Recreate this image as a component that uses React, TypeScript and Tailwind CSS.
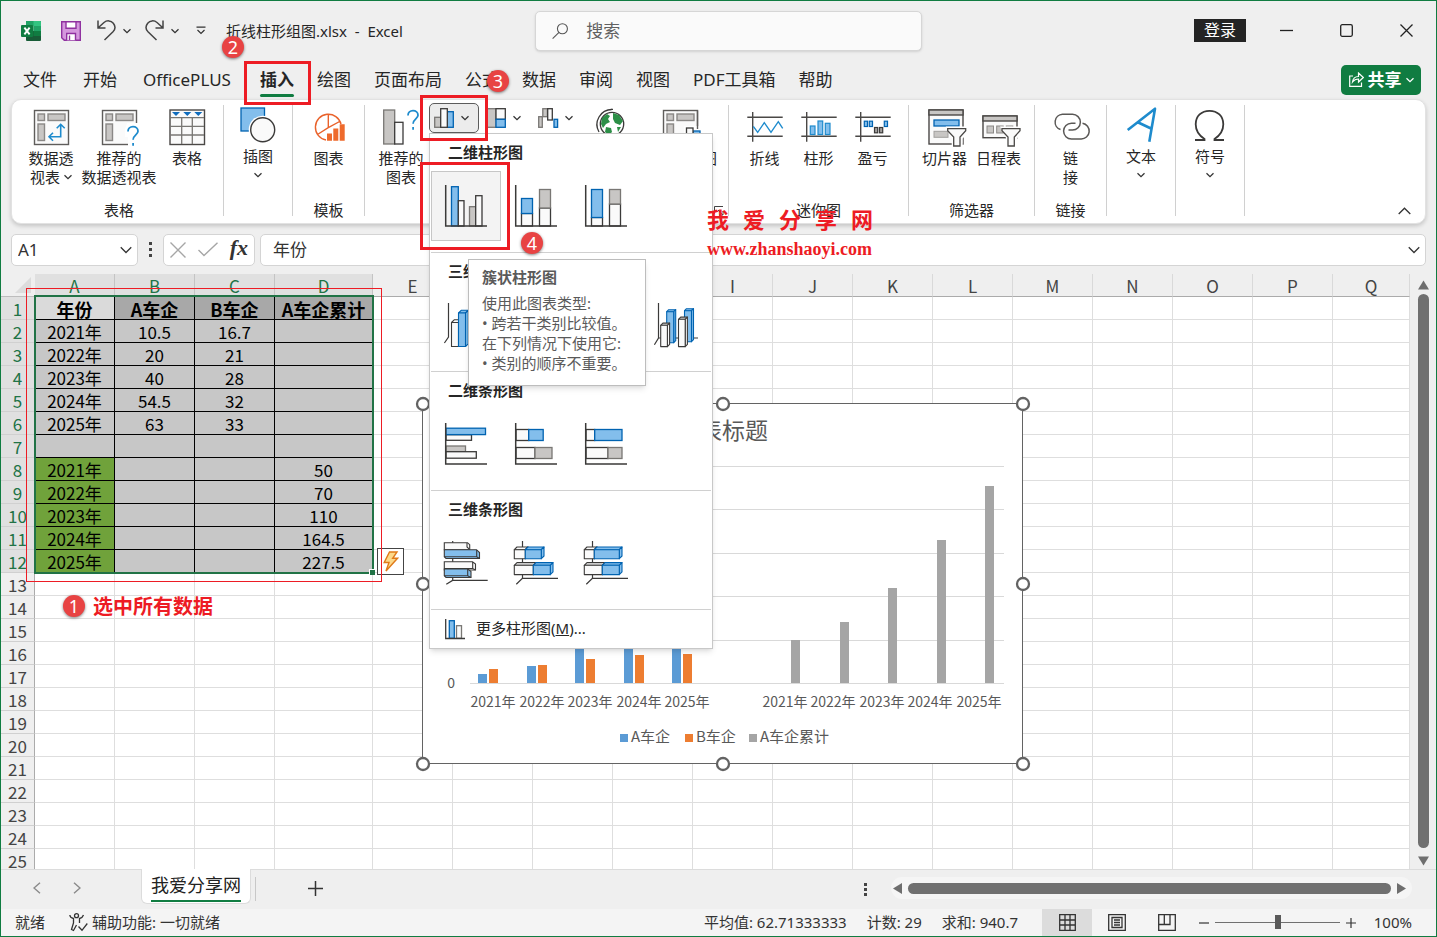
import { useState, type ReactNode } from "react";
import clsx from "clsx";

type Tone = "blue" | "gray" | "white";

const tones: Record<Tone, { fill: string; stroke: string }> = {
  blue: { fill: "#83beec", stroke: "#0063b1" },
  gray: { fill: "#c8c6c4", stroke: "#797774" },
  white: { fill: "#fafafa", stroke: "#3b3a39" },
};

type BarProps = { x: number; y: number; w: number; h: number; tone: Tone };

function Bar({ x, y, w, h, tone }: BarProps) {
  return <rect x={x} y={y} width={w} height={h} fill={tones[tone].fill} stroke={tones[tone].stroke} strokeWidth={1.3} />;
}

// Box with a top and a side face
function Prism({ x, y, w, h, tone, d = 2.7 }: BarProps & { d?: number }) {
  const t = tones[tone];
  return (
    <g fill={t.fill} stroke={t.stroke} strokeWidth={1.1} strokeLinejoin="round">
      <path d={`M${x} ${y}l${d} ${-d}h${w}l${-d} ${d}z`} />
      <path d={`M${x + w} ${y}l${d} ${-d}v${h}l${-d} ${d}z`} />
      <rect x={x} y={y} width={w} height={h} />
    </g>
  );
}

function Svg({ w = 36, h = 36, children }: { w?: number; h?: number; children: ReactNode }) {
  return (
    <svg width={w} height={h} viewBox={`0 0 ${w} ${h}`} fill="none" className="shrink-0 overflow-visible" aria-hidden="true">
      {children}
    </svg>
  );
}

function Chevron({ size = 8, color = "#333" }: { size?: number; color?: string }) {
  return (
    <svg width={size} height={size} viewBox="0 0 8 8" fill="none" stroke={color} strokeWidth={10 / size} className="shrink-0" aria-hidden="true">
      <path d="M0.5 2.2L4 5.7L7.5 2.2" />
    </svg>
  );
}

const Axes = () => <path d="M0.7 0V41H42" stroke="#3b3a39" strokeWidth={1.5} />;

/* ---------- ribbon icons ---------- */

const PivotFrame = () => (
  <g stroke="#5f5d5b" strokeWidth={1.4}>
    <rect x={1.5} y={1.5} width={34} height={34} fill="#fafafa" />
    <g fill="#c8c6c4" stroke="#8a8886">
      <rect x={5} y={5} width={6.5} height={6.5} />
      <rect x={15} y={5} width={17} height={6.5} />
      <rect x={5} y={15} width={6.5} height={16.5} />
    </g>
  </g>
);

const PivotIcon = () => (
  <Svg>
    <PivotFrame />
    <path d="M27.7 15.5V27.7H16M23.7 19.3L27.7 15.3L31.7 19.3M20 23.7L16 27.7L20 31.7" stroke="#1e8bcd" strokeWidth={1.6} />
  </Svg>
);

const Question = ({ x, y }: { x: number; y: number }) => (
  <path
    transform={`translate(${x} ${y})`}
    d="M0.5 5.5C0.5 2.5 2.7 0.7 5.5 0.7S10.5 2.5 10.5 5.3C10.5 8.7 5.6 9.3 5.6 13.7M5.6 17V19.8"
    stroke="#1e8bcd"
    strokeWidth={1.8}
  />
);

const RecommendedPivotIcon = () => (
  <Svg>
    <PivotFrame />
    <path d="M26 14H38V38H27V28H24V20Z" fill="#fff" />
    <Question x={26.5} y={17} />
  </Svg>
);

const TableIcon = () => (
  <Svg>
    <rect x={1} y={1} width={34.5} height={34.5} fill="#fafafa" stroke="#4a4846" strokeWidth={1.4} />
    <path d="M1 8.7H35M1 17.3H35M1 26H35M12.7 8.7V35M23.3 8.7V35" stroke="#797774" strokeWidth={1.3} />
    <path d="M3 3H11L7 7ZM14.3 3H22.3L18.3 7ZM25.3 3H33.3L29.3 7Z" fill="#0f6cbd" />
  </Svg>
);

const ShapesIcon = () => (
  <Svg>
    <rect x={1} y={1} width={23.5} height={23} fill="#83beec" stroke="#0063b1" strokeWidth={1.3} />
    <circle cx={22.7} cy={22.7} r={14} fill="#fff" />
    <circle cx={22.7} cy={22.7} r={12} fill="#fafafa" stroke="#3b3a39" strokeWidth={1.4} />
  </Svg>
);

const TemplateChartIcon = () => (
  <Svg>
    <path d="M15 31A13 13 0 1 1 30 15M17.3 5V18.7L6.5 25.5M17.3 18.7L29.5 12" stroke="#e9622b" strokeWidth={1.4} />
    <path d="M16 24.5h5v7.3h-5zM22.3 19.5h5v12.3h-5zM28.7 15.3h5v16.5h-5z" fill="#ee6a2c" />
  </Svg>
);

const RecommendedChartIcon = () => (
  <Svg>
    <Bar x={0.7} y={1} w={11} h={34} tone="gray" />
    <Bar x={11.7} y={13.3} w={8.3} h={21.7} tone="white" />
    <Question x={24.5} y={1} />
  </Svg>
);

const ColumnIcon = () => (
  <Svg w={20} h={20}>
    <Bar x={0.7} y={9.3} w={6} h={10} tone="gray" />
    <Bar x={13.3} y={3.7} w={6} h={15.6} tone="blue" />
    <Bar x={6.7} y={0.7} w={6.6} h={18.6} tone="white" />
  </Svg>
);

const HierarchyIcon = () => (
  <Svg w={20} h={20}>
    <Bar x={0.7} y={0.7} w={9.3} h={18.6} tone="gray" />
    <Bar x={10} y={0.7} w={9.3} h={10.6} tone="white" />
    <Bar x={10} y={11.3} w={9.3} h={8} tone="blue" />
  </Svg>
);

const WaterfallIcon = () => (
  <Svg w={20} h={20}>
    <Bar x={0.7} y={8.7} w={3.6} h={10.6} tone="gray" />
    <Bar x={4.8} y={0.7} w={4.6} h={8} tone="gray" />
    <Bar x={9.7} y={0.7} w={4.6} h={11.3} tone="white" />
    <Bar x={16} y={11.3} w={3.6} h={8} tone="blue" />
  </Svg>
);

const GlobeIcon = () => (
  <Svg>
    <circle cx={19} cy={15} r={11.7} fill="#fff" stroke="#3b3a39" strokeWidth={1.3} />
    <path d="M19 0.5A15 15 0 0 0 6 23M15 1A15 15 0 0 1 20 0.3" stroke="#3b3a39" strokeWidth={1.3} />
    <path d="M9 9L14 5L17 7L15 10L17 13L13 15L10 19L8 15ZM20 4L26 6L30 12L27 16L22 14L20 10ZM13 18L18 19L19 23L16 26L12 23ZM24 18L28 18L25 23Z" fill="#2c8f47" />
  </Svg>
);

const PivotChartIcon = () => (
  <Svg>
    <PivotFrame />
    <path d="M22 17H40V38H22Z" fill="#fff" />
    <path d="M35.5 1.5V20" stroke="#5f5d5b" strokeWidth={1.4} />
    <Bar x={31} y={22} w={7} h={14} tone="blue" />
    <Bar x={24.5} y={19} w={6.5} h={17} tone="white" />
  </Svg>
);

const SparkFrame = () => <path d="M0.3 8.3H35.7M0.3 27.3H35.7M5.7 3V32.7" stroke="#4a4846" strokeWidth={1.4} />;

const SparkLineIcon = () => (
  <Svg>
    <SparkFrame />
    <path d="M6.3 17.3L10.7 23.3L17.3 13.7L24 23.3L31.3 12.7L35.7 19.3" stroke="#1e8bcd" strokeWidth={1.4} />
  </Svg>
);

const SparkColumnIcon = () => (
  <Svg>
    <SparkFrame />
    <g fill="#83beec" stroke="#1e8bcd" strokeWidth={1.2}>
      <rect x={9.3} y={17} width={4.7} height={8.5} />
      <rect x={17} y={12} width={4.7} height={13.5} />
      <rect x={24.3} y={14.3} width={4.7} height={11.2} />
    </g>
  </Svg>
);

const WinLossIcon = () => (
  <Svg>
    <SparkFrame />
    <g fill="#83beec" stroke="#0063b1" strokeWidth={1.2}>
      <rect x={9.3} y={12.2} width={3.2} height={5.3} />
      <rect x={14.3} y={12.2} width={3.2} height={5.3} />
      <rect x={29.3} y={12.2} width={3.2} height={5.3} />
    </g>
    <g fill="#a19f9d" stroke="#3b3a39" strokeWidth={1.2}>
      <rect x={19.5} y={18.5} width={3.2} height={5.3} />
      <rect x={24.5} y={18.5} width={3.2} height={5.3} />
    </g>
  </Svg>
);

const Funnel = ({ x }: { x: number }) => (
  <g transform={`translate(${x} 0)`}>
    <path d="M-2 17.5H20V24L15 29.5V38H4V29Z" fill="#fff" />
    <path d="M0 19.7H18V21.7L12.3 28V37H6V28L0 21.7Z" fill="#fafafa" stroke="#4a4846" strokeWidth={1.3} />
  </g>
);

const SlicerIcon = () => (
  <Svg>
    <rect x={2} y={1} width={34} height={34} fill="#fafafa" stroke="#4a4846" strokeWidth={1.4} />
    <rect x={2} y={1} width={34} height={5} fill="#c8c6c4" stroke="#4a4846" strokeWidth={1.4} />
    <Bar x={7} y={11} w={25} h={6} tone="blue" />
    <rect x={7} y={22.3} width={14} height={6} fill="#c8c6c4" stroke="#a19f9d" />
    <Funnel x={20.7} />
  </Svg>
);

const TimelineIcon = () => (
  <Svg>
    <rect x={2} y={7} width={34} height={21.7} fill="#fafafa" stroke="#4a4846" strokeWidth={1.4} />
    <rect x={2} y={7} width={34} height={5} fill="#c8c6c4" stroke="#4a4846" strokeWidth={1.4} />
    <g fill="#c8c6c4" stroke="#8a8886">
      <rect x={6} y={17} width={6.5} height={7} />
      <rect x={15.7} y={17} width={6.5} height={7} />
      <rect x={25.3} y={17} width={6.5} height={7} />
    </g>
    <Funnel x={21} />
  </Svg>
);

const LinkIcon = () => (
  <Svg>
    <path
      d="M7.5 20.5A7.8 7.8 0 0 1 9.5 5.3H19.5A7.8 7.8 0 0 1 19.5 21H15.5M29.5 14.3A7.9 7.9 0 0 1 28 30H18.5A7.9 7.9 0 0 1 18.5 14.2H22.5"
      stroke="#5a5856"
      strokeWidth={1.5}
    />
  </Svg>
);

const TextIcon = () => (
  <Svg>
    <path d="M4.7 23L32 1.7L26.3 34.7M15.3 15.5L28 21.5" stroke="#1e8bcd" strokeWidth={2.6} strokeLinejoin="round" />
  </Svg>
);

const OmegaIcon = () => (
  <Svg>
    <path d="M3 33H12.5V32C7 28.5 3.7 23.5 3.7 17.3C3.7 9 9.5 3.8 17.5 3.8S31.3 9 31.3 17.3C31.3 23.5 28 28.5 22.5 32V33H32" stroke="#3b3a39" strokeWidth={1.8} />
  </Svg>
);

/* ---------- gallery icons ---------- */

const galleryIcons: Record<string, ReactNode> = {
  "簇状柱形图": (
    <>
      <Bar x={6.5} y={1.7} w={6.8} h={39.3} tone="blue" />
      <Bar x={13.3} y={15.7} w={5.7} h={25.3} tone="white" />
      <Bar x={24.5} y={21.7} w={6.2} h={19.3} tone="gray" />
      <Bar x={30.7} y={10.7} w={6.3} h={30.3} tone="white" />
      <Axes />
    </>
  ),
  "堆积柱形图": (
    <>
      <Bar x={6.5} y={28.5} w={11} h={12.5} tone="white" />
      <Bar x={6.5} y={13.5} w={11} h={15} tone="blue" />
      <Bar x={24.5} y={23} w={11} h={18} tone="white" />
      <Bar x={24.5} y={4.5} w={11} h={18.5} tone="gray" />
      <Axes />
    </>
  ),
  "百分比堆积柱形图": (
    <>
      <Bar x={6.5} y={32.5} w={11} h={8.5} tone="white" />
      <Bar x={6.5} y={4.5} w={11} h={28} tone="blue" />
      <Bar x={24.5} y={19} w={11} h={22} tone="white" />
      <Bar x={24.5} y={4.5} w={11} h={14.5} tone="gray" />
      <Axes />
    </>
  ),
  "三维簇状柱形图": (
    <>
      <path d="M3.5 -1V33L-0.6 39" stroke="#3b3a39" strokeWidth={1.2} />
      <Prism x={6.5} y={18.5} w={7} h={24} tone="white" />
      <Prism x={13.5} y={9} w={7} h={33.5} tone="blue" />
      <Prism x={26} y={22} w={6} h={20.5} tone="white" />
    </>
  ),
  "三维堆积柱形图": (
    <>
      <path d="M3.5 -1V34L-0.6 40.7M3.5 34H43" stroke="#3b3a39" strokeWidth={1.2} />
      <Prism x={8} y={28} w={9} h={14.5} tone="white" />
      <Prism x={8} y={14} w={9} h={14} tone="blue" />
    </>
  ),
  "三维百分比堆积柱形图": (
    <>
      <path d="M3.5 -1V34L-0.6 40.7M3.5 34H43" stroke="#3b3a39" strokeWidth={1.2} />
      <Prism x={8} y={30} w={9} h={12.5} tone="white" />
      <Prism x={8} y={8} w={9} h={22} tone="blue" />
    </>
  ),
  "三维柱形图": (
    <>
      <path d="M3.5 -1V34L-0.6 40.7M3.5 34H43" stroke="#3b3a39" strokeWidth={1.2} />
      <Prism x={11.7} y={7.7} w={7} h={31} tone="blue" d={2} />
      <Prism x={5.7} y={21.3} w={6.7} h={21.3} tone="white" d={2.2} />
      <Prism x={29.5} y={6.7} w={7} h={31} tone="blue" d={2} />
      <Prism x={23.5} y={15.3} w={6.7} h={27.3} tone="white" d={2.2} />
    </>
  ),
  "簇状条形图": (
    <>
      <Bar x={1} y={11.7} w={25.5} h={5.6} tone="white" />
      <Bar x={1} y={5.2} w={39.5} h={6.4} tone="blue" />
      <Bar x={1} y={23} w={19.5} h={5.7} tone="gray" />
      <Bar x={1} y={28.7} w={30.3} h={6.5} tone="white" />
      <Axes />
    </>
  ),
  "堆积条形图": (
    <>
      <Bar x={1} y={6.5} w={12.7} h={11} tone="white" />
      <Bar x={13.7} y={6.5} w={14.5} h={11} tone="blue" />
      <Bar x={1} y={24.5} w={19} h={11} tone="white" />
      <Bar x={20} y={24.5} w={17} h={11} tone="gray" />
      <Axes />
    </>
  ),
  "百分比堆积条形图": (
    <>
      <Bar x={1} y={6.5} w={8.7} h={11} tone="white" />
      <Bar x={9.7} y={6.5} w={27.3} h={11} tone="blue" />
      <Bar x={1} y={24.5} w={22} h={11} tone="white" />
      <Bar x={23} y={24.5} w={14} h={11} tone="gray" />
      <Axes />
    </>
  ),
  "三维簇状条形图": (
    <>
      <path d="M7.7 -1V38.3L1.3 42.3M7.7 38.3H42.7" stroke="#3b3a39" strokeWidth={1.2} />
      <g strokeWidth={1.1} stroke="#3b3a39">
        <path d="M-0.7 0.7H22.5L24.7 2.7V7.7H-0.7Z" fill="#fafafa" />
        <path d="M22 1V5L24.7 7.7" />
        <path d="M-0.7 7.7H31.5L34.5 10.5V16.5H1L-0.7 14.7Z" fill="#83beec" />
        <path d="M-0.7 14.7H31.7L34.5 16.5M31.7 8V14.7" />
        <path d="M-0.7 19.7H27.5L30.5 22V28H-0.7Z" fill="#fafafa" />
        <path d="M-0.7 26.5H27.7L30.5 28M27.7 20V26.5" />
        <path d="M-0.7 27H22.7L26 29.5V35.5H1L-0.7 33.7Z" fill="#83beec" />
        <path d="M-0.7 33.7H22.7L26 35.5M22.7 27V33.7" />
      </g>
    </>
  ),
  "三维堆积条形图": (
    <>
      <path d="M7.5 -1V36.3L1.3 42.3M7.5 36.3H43" stroke="#3b3a39" strokeWidth={1.2} />
      <Prism x={-0.7} y={7.7} w={11} h={9} tone="white" />
      <Prism x={10.3} y={7.7} w={16} h={9} tone="blue" />
      <Prism x={-0.7} y={23.3} w={19} h={9.3} tone="white" />
      <Prism x={18.3} y={23.3} w={17} h={9.3} tone="blue" />
    </>
  ),
  "三维百分比堆积条形图": (
    <>
      <path d="M7.5 -1V36.3L1.3 42.3M7.5 36.3H43" stroke="#3b3a39" strokeWidth={1.2} />
      <Prism x={-0.7} y={7.7} w={10} h={9} tone="white" />
      <Prism x={9.3} y={7.7} w={25} h={9} tone="blue" />
      <Prism x={-0.7} y={23.3} w={18} h={9.3} tone="white" />
      <Prism x={17.3} y={23.3} w={17} h={9.3} tone="blue" />
    </>
  ),
};

const gallery = [
  { title: "二维柱形图", items: ["簇状柱形图", "堆积柱形图", "百分比堆积柱形图"] },
  { title: "三维柱形图", items: ["三维簇状柱形图", "三维堆积柱形图", "三维百分比堆积柱形图", "三维柱形图"] },
  { title: "二维条形图", items: ["簇状条形图", "堆积条形图", "百分比堆积条形图"] },
  { title: "三维条形图", items: ["三维簇状条形图", "三维堆积条形图", "三维百分比堆积条形图"] },
];

function Tooltip() {
  return (
    <div role="tooltip" className="absolute left-[38px] top-[125px] z-10 w-[178px] border border-[#bdbdbd] bg-white px-[13px] pb-3 pt-[7px] text-[15px] leading-5 text-[#5a5a5a] shadow-md">
      <div className="mb-[6px] font-bold">簇状柱形图</div>
      <div>使用此图表类型:</div>
      <div>• 跨若干类别比较值。</div>
      <div>在下列情况下使用它:</div>
      <div>• 类别的顺序不重要。</div>
    </div>
  );
}

function ChartMenu() {
  return (
    <div className="absolute left-0 top-full z-20 w-[284px] border border-[#c8c8c8] bg-white text-[15px] text-[#262626] shadow-md">
      {gallery.map((section) => (
        <div key={section.title} className="mx-px h-[119px] border-b border-[#d0d0d0]">
          <div className="h-[37px] pl-[17px] font-bold leading-[37px]">{section.title}</div>
          <div className="flex">
            {section.items.map((name) => (
              <button
                key={name}
                aria-label={name}
                className={clsx("flex size-[70px] items-center justify-center border", name === "簇状柱形图" ? "border-[#c6c6c6] bg-[#f3f3f3]" : "border-transparent")}
              >
                <Svg w={42} h={42}>{galleryIcons[name]}</Svg>
              </button>
            ))}
          </div>
        </div>
      ))}
      <button className="flex h-[38px] w-full items-center gap-[11px] pl-[15px]">
        <Svg w={20} h={20}>
          <Bar x={4.3} y={1.7} w={5} h={17.6} tone="blue" />
          <rect x={11.5} y={6.7} width={5} height={12.6} fill="#fafafa" stroke="#797774" strokeWidth={1.3} />
          <path d="M0.7 0V19.5H20" stroke="#3b3a39" strokeWidth={1.3} />
        </Svg>
        <span>更多柱形图(<u>M</u>)...</span>
      </button>
      <Tooltip />
    </div>
  );
}

/* ---------- ribbon ---------- */

function RibbonButton({ icon, lines, drop, width, high }: { icon: ReactNode; lines: string[]; drop?: "inline" | "below"; width: string; high?: boolean }) {
  return (
    <button className={clsx("flex flex-col items-center whitespace-nowrap", high ? "pt-1" : "pt-[6px]", width)}>
      {icon}
      <span className="mt-1 flex flex-col items-center leading-[19px]">
        {lines.map((l, i) => (
          <span key={l} className="flex items-center gap-1">
            {l}
            {drop === "inline" && i === lines.length - 1 ? <Chevron /> : null}
          </span>
        ))}
      </span>
      {drop === "below" ? <span className="flex h-[19px] items-center"><Chevron /></span> : null}
    </button>
  );
}

function Group({ label, className, children, launcher }: { label?: string; className: string; children: ReactNode; launcher?: boolean }) {
  return (
    <>
      <div className={clsx("relative flex flex-col pt-[3px]", className)}>
        <div className="flex grow items-start justify-center">{children}</div>
        <div className="h-[21px] text-center leading-4">{label}</div>
        {launcher ? (
          <svg width="10" height="10" viewBox="0 0 10 10" fill="none" stroke="#444" className="absolute bottom-[7px] right-1" aria-hidden="true">
            <path d="M0.5 8V0.5H9M4 4L9 9M9 5V9H5" />
          </svg>
        ) : null}
      </div>
      <div className="mb-[7px] mt-[5px] w-px shrink-0 bg-[#d0d0d0]" />
    </>
  );
}

function SmallDrop({ icon, label, active, children }: { icon: ReactNode; label: string; active?: boolean; children?: ReactNode }) {
  return (
    <div className="relative">
      <button
        aria-label={label}
        className={clsx("flex h-[30px] w-[50px] items-center gap-[7px] rounded-[5px] border pl-1", active ? "border-[#5c5c5c] bg-[#ececec]" : "border-transparent")}
      >
        {icon}
        <Chevron />
      </button>
      {children}
    </div>
  );
}

function Ribbon() {
  return (
    <section className="relative z-10 mx-[10px] flex h-[126px] rounded-[10px] border border-[#e2e2e2] bg-white text-[15px] text-[#262626] shadow-[0_2px_4px_rgba(0,0,0,0.18)]">
      <Group label="表格" className="w-[211px] pl-[3px]">
        <RibbonButton width="w-[68px]" icon={<PivotIcon />} lines={["数据透", "视表"]} drop="inline" />
        <RibbonButton width="w-[68px]" icon={<RecommendedPivotIcon />} lines={["推荐的", "数据透视表"]} />
        <RibbonButton width="w-[68px]" icon={<TableIcon />} lines={["表格"]} />
      </Group>
      <Group className="w-[68px]">
        <RibbonButton width="w-full" high icon={<ShapesIcon />} lines={["插图"]} drop="below" />
      </Group>
      <Group label="模板" className="w-[71px]">
        <RibbonButton width="w-full" icon={<TemplateChartIcon />} lines={["图表"]} />
      </Group>
      <Group label="图表" className="w-[363px]" launcher>
        <RibbonButton width="w-[56px]" icon={<RecommendedChartIcon />} lines={["推荐的", "图表"]} />
        <div className="flex gap-[2px]">
          <SmallDrop icon={<ColumnIcon />} label="插入柱形图或条形图" active>
            <ChartMenu />
          </SmallDrop>
          <SmallDrop icon={<HierarchyIcon />} label="插入层次结构图表" />
          <SmallDrop icon={<WaterfallIcon />} label="插入瀑布图" />
        </div>
        <RibbonButton width="w-[56px]" icon={<GlobeIcon />} lines={["地图"]} />
        <RibbonButton width="w-[81px]" icon={<PivotChartIcon />} lines={["数据透视图"]} />
      </Group>
      <Group label="迷你图" className="w-[179px]">
        <RibbonButton width="w-[54px]" icon={<SparkLineIcon />} lines={["折线"]} />
        <RibbonButton width="w-[54px]" icon={<SparkColumnIcon />} lines={["柱形"]} />
        <RibbonButton width="w-[54px]" icon={<WinLossIcon />} lines={["盈亏"]} />
      </Group>
      <Group label="筛选器" className="w-[125px]">
        <RibbonButton width="w-[54px]" icon={<SlicerIcon />} lines={["切片器"]} />
        <RibbonButton width="w-[54px]" icon={<TimelineIcon />} lines={["日程表"]} />
      </Group>
      <Group label="链接" className="w-[71px]">
        <RibbonButton width="w-full" icon={<LinkIcon />} lines={["链", "接"]} />
      </Group>
      <Group className="w-[68px]">
        <RibbonButton width="w-full" high icon={<TextIcon />} lines={["文本"]} drop="below" />
      </Group>
      <Group className="w-[68px]">
        <RibbonButton width="w-full" high icon={<OmegaIcon />} lines={["符号"]} drop="below" />
      </Group>
      <button aria-label="折叠功能区" className="mb-2 ml-auto mr-[14px] self-end">
        <svg width="13" height="8" viewBox="0 0 13 8" fill="none" stroke="#333" strokeWidth="1.3"><path d="M0.7 7L6.5 1.2L12.3 7" /></svg>
      </button>
    </section>
  );
}

/* ---------- top bars ---------- */

function TitleBar() {
  return (
    <header className="flex h-[60px] items-center">
      <div className="flex w-[534px] items-center pl-5">
        <svg width="20" height="20" viewBox="0 0 20 20" aria-hidden="true">
          <path d="M5 0H20V5H5Z" fill="#21a366" />
          <path d="M12.5 0H19a1 1 0 0 1 1 1V5H12.5Z" fill="#33c481" />
          <path d="M5 5H12.5V10H5Z" fill="#107c41" />
          <path d="M12.5 5H20V10H12.5Z" fill="#21a366" />
          <path d="M5 10H20V19a1 1 0 0 1-1 1H6a1 1 0 0 1-1-1Z" fill="#185c37" />
          <path d="M12.5 10H20V15H12.5Z" fill="#107c41" />
          <rect y="4" width="12" height="12" rx="1" fill="#107c41" />
          <path d="M3.4 6.6L8.6 13.4M8.6 6.6L3.4 13.4" stroke="#fff" strokeWidth="1.9" />
        </svg>
        <button aria-label="保存" className="ml-5">
          <svg width="20" height="20" viewBox="0 0 20 20" fill="#d497dd" stroke="#9032a0" strokeWidth="1.4">
            <path d="M0.7 0.7H19.3V19.3H3.3L0.7 16.7Z" />
            <path d="M5 0.7H15V7.3H5ZM5.7 19.3V12.5H14.5V19.3" fill="#fff" />
            <path d="M8.5 14.5V19" />
          </svg>
        </button>
        <button aria-label="撤消" className="ml-4 flex items-center gap-[7px]">
          <svg width="19" height="21" viewBox="0 0 19 21" fill="none" stroke="#444" strokeWidth="1.5">
            <path d="M1 0.5V8H8.5M1.2 7.8L7 2.5C10 0 14 0.5 16.3 3.2C18.5 6 18.3 9.3 16 11.7L7.5 20" />
          </svg>
          <Chevron />
        </button>
        <button aria-label="恢复" className="ml-[14px] flex items-center gap-[7px]">
          <svg width="19" height="21" viewBox="0 0 19 21" fill="none" stroke="#444" strokeWidth="1.5">
            <path d="M18 0.5V8H10.5M17.8 7.8L12 2.5C9 0 5 0.5 2.7 3.2C0.5 6 0.7 9.3 3 11.7L11.5 20" />
          </svg>
          <Chevron />
        </button>
        <button aria-label="自定义快速访问工具栏" className="ml-[17px]">
          <svg width="10" height="9" viewBox="0 0 10 9" fill="none" stroke="#333" strokeWidth="1.2"><path d="M0.5 1.2H9.5M1.5 4L5 7.5L8.5 4" /></svg>
        </button>
        <h1 className="ml-5 whitespace-pre text-[15px] text-[#262626]">折线柱形组图.xlsx  -  Excel</h1>
      </div>
      <label className="flex h-10 w-[387px] items-center gap-[18px] rounded-[5px] border border-[#d6d6d6] bg-[#fafafa] pl-4 shadow-sm">
        <svg width="18" height="18" viewBox="0 0 18 18" fill="none" stroke="#555" strokeWidth="1.2" aria-hidden="true">
          <circle cx="11.5" cy="6.5" r="5.5" />
          <path d="M7.7 10.5L0.7 17.5" />
        </svg>
        <input aria-label="搜索" placeholder="搜索" className="w-full bg-transparent text-[17px] outline-none placeholder:text-[#616161]" />
      </label>
      <button className="ml-auto h-[23px] w-[52px] bg-[#242424] text-[16px] leading-[23px] text-white">登录</button>
      <div className="flex items-center gap-[47px] pl-[34px] pr-[23px]">
        <button aria-label="最小化"><svg width="13" height="13" viewBox="0 0 13 13" stroke="#222" strokeWidth="1.3"><path d="M0 6.5H13" /></svg></button>
        <button aria-label="最大化"><svg width="13" height="13" viewBox="0 0 13 13" fill="none" stroke="#222" strokeWidth="1.3"><rect x="0.7" y="0.7" width="11.6" height="11.6" rx="1.5" /></svg></button>
        <button aria-label="关闭"><svg width="13" height="13" viewBox="0 0 13 13" stroke="#222" strokeWidth="1.3"><path d="M0.5 0.5L12.5 12.5M12.5 0.5L0.5 12.5" /></svg></button>
      </div>
    </header>
  );
}

const leftTabs = ["文件", "开始", "OfficePLUS", "插入"];
const rightTabs = ["绘图", "页面布局", "公式", "数据", "审阅", "视图", "PDF工具箱", "帮助"];

function TabBar() {
  const tab = (t: string) => (
    <button key={t} className={clsx("relative h-full text-left", t === "插入" && "font-bold", t === "OfficePLUS" && "min-w-[91px]")}>
      {t}
      {t === "插入" ? <span className="absolute inset-x-0 bottom-[2px] h-[3px] rounded-sm bg-[#107c41]" /> : null}
    </button>
  );
  return (
    <nav className="flex h-[38px] items-center pl-[22px] pr-[15px] text-[17px] text-[#262626]">
      <div className="mr-[23px] flex h-full gap-[26px]">{leftTabs.map(tab)}</div>
      <div className="flex h-full gap-[23px]">{rightTabs.map(tab)}</div>
      <button className="ml-auto flex h-[30px] w-20 items-center justify-center gap-1 rounded-[5px] bg-[#107c41] font-bold text-white">
        <svg width="15" height="15" viewBox="0 0 15 15" fill="none" stroke="#fff" strokeWidth="1.2" aria-hidden="true">
          <path d="M4 4H0.7V14.3H12.5V10.5M3.5 10C4 6 6.5 4.5 9.5 4.5V1L14.3 5.5L9.5 10V7C7 7 5 8 3.5 10Z" />
        </svg>
        共享
        <Chevron color="#fff" />
      </button>
    </nav>
  );
}

function FormulaBar() {
  return (
    <div className="mx-[10px] mb-2 mt-[10px] flex h-8 items-center text-[17px] text-[#333]">
      <label className="flex h-full w-[127px] items-center rounded-[5px] border border-[#d4d4d4] bg-white pl-[6px] pr-[5px]">
        <input aria-label="名称框" defaultValue="A1" className="w-full min-w-0 outline-none" />
        <Chevron size={12} />
      </label>
      <svg width="3" height="15" viewBox="0 0 3 15" className="mx-[11px]" fill="#444" aria-hidden="true"><path d="M0 0h3v3h-3zM0 6h3v3h-3zM0 12h3v3h-3z" /></svg>
      <div className="flex h-full w-[92px] items-center justify-between rounded-[5px] border border-[#d4d4d4] bg-white px-[6px]">
        <button aria-label="取消"><svg width="16" height="16" viewBox="0 0 16 16" stroke="#a6a6a6" strokeWidth="1.4"><path d="M0.5 0.5L15.5 15.5M15.5 0.5L0.5 15.5" /></svg></button>
        <button aria-label="输入"><svg width="20" height="15" viewBox="0 0 20 15" fill="none" stroke="#a6a6a6" strokeWidth="1.4"><path d="M0.5 8L6 13.5L19.5 0.7" /></svg></button>
        <button className="pb-1 font-['Liberation_Serif',serif] text-[22px] font-bold italic leading-6">fx</button>
      </div>
      <label className="ml-[5px] flex h-full grow items-center rounded-[5px] border border-[#d4d4d4] bg-white pl-3 pr-[5px]">
        <input aria-label="编辑栏" defaultValue="年份" className="grow outline-none" />
        <Chevron size={12} />
      </label>
    </div>
  );
}

/* ---------- sheet ---------- */

const columns = "ABCDEFGHIJKLMNOPQ".split("");

const cells: string[][] = [
  ["年份", "A车企", "B车企", "A车企累计"],
  ["2021年", "10.5", "16.7", ""],
  ["2022年", "20", "21", ""],
  ["2023年", "40", "28", ""],
  ["2024年", "54.5", "32", ""],
  ["2025年", "63", "33", ""],
  ["", "", "", ""],
  ["2021年", "", "", "50"],
  ["2022年", "", "", "70"],
  ["2023年", "", "", "110"],
  ["2024年", "", "", "164.5"],
  ["2025年", "", "", "227.5"],
];

function cellTone(r: number, c: number) {
  if (r === 0) return c === 0 ? "bg-[#dadada] text-[18px] font-bold" : "bg-[#a8a8a8] text-[18px] font-bold";
  if (c === 0 && r > 6) return "bg-[#70a23b]";
  return "bg-[#c7c7c7]";
}

function Grid() {
  return (
    <table className="w-full table-fixed border-separate border-spacing-0 text-center font-['Noto_Sans_CJK_SC',sans-serif] text-[17px] leading-5">
      <colgroup>
        <col className="w-[34px]" />
        {columns.map((c) => (
          <col key={c} className={c === "D" ? "w-[98px]" : c === "Q" ? "" : "w-[80px]"} />
        ))}
      </colgroup>
      <thead>
        <tr className="h-[23px]">
          <th className="border-b border-[#bdbdbd] p-0">
            <svg width="16" height="16" viewBox="0 0 16 16" className="ml-[14px]" aria-hidden="true"><path d="M16 0V16H0Z" fill="#dcdcdc" /></svg>
          </th>
          {columns.map((c, i) => (
            <th key={c} className={clsx("border-b border-r p-0 pt-[2px] font-normal", i < 4 ? "border-b-[#bdbdbd] border-r-[#c4c4c4] bg-[#e0e0e0] text-[#217346]" : "border-b-[#ababab] border-r-[#d9d9d9] text-[#444]")}>
              {c}
            </th>
          ))}
        </tr>
      </thead>
      <tbody>
        {Array.from({ length: 25 }, (_, r) => (
          <tr key={r} className="h-[23px]">
            <th className={clsx("border-b border-r border-b-[#d0d0d0] border-r-[#ababab] p-0 pt-[2px] font-normal", r < 12 ? "bg-[#e0e0e0] text-[#217346]" : "text-[#444]")}>{r + 1}</th>
            {columns.map((c, i) =>
              r < 12 && i < 4 ? (
                <td key={c} className={clsx("whitespace-nowrap border-b border-r border-black p-0 pt-[2px] text-black", cellTone(r, i))}>{cells[r][i]}</td>
              ) : (
                <td key={c} className="border-b border-r border-[#dedede] bg-white p-0" />
              )
            )}
          </tr>
        ))}
      </tbody>
    </table>
  );
}

const series = [
  { name: "A车企", color: "#5b9bd5", offset: 8, values: [10.5, 20, 40, 54.5, 63, 0, 0, 0, 0, 0, 0] },
  { name: "B车企", color: "#ed7d31", offset: 19, values: [16.7, 21, 28, 32, 33, 0, 0, 0, 0, 0, 0] },
  { name: "A车企累计", color: "#a5a5a5", offset: 30, values: [0, 0, 0, 0, 0, 0, 50, 70, 110, 164.5, 227.5] },
];
const years = ["2021年", "2022年", "2023年", "2024年", "2025年", "", "2021年", "2022年", "2023年", "2024年", "2025年"];
const legendX = [197, 262, 326];

function Chart() {
  const step = 534 / 11;
  return (
    <svg width="601" height="361" viewBox="0 0 601 361" className="absolute left-[421px] top-[130px] overflow-visible font-['Noto_Sans_CJK_SC',sans-serif]" fill="#595959" role="img" aria-label="图表标题">
      <rect x="0.5" y="-0.5" width="600" height="360" fill="#fff" stroke="#636363" />
      <text x="300" y="35" fontSize="23" textAnchor="middle">图表标题</text>
      {[0, 1, 2, 3, 4, 5].map((n) => (
        <path key={n} d={`M48 ${Math.round(279 - n * 43.4) + 0.5}H582`} stroke="#d9d9d9" />
      ))}
      {[0, 50, 100, 150, 200, 250].map((n) => (
        <text key={n} x="33" y={284 - n * 0.868} fontSize="14" textAnchor="end">{n}</text>
      ))}
      {series.map((s) =>
        s.values.map((v, i) =>
          v ? <rect key={s.name + i} x={Math.round(48 + i * step + s.offset)} y={Math.round(279 - v * 0.868)} width="9" height={Math.round(v * 0.868)} fill={s.color} /> : null
        )
      )}
      {years.map((y, i) => (
        <text key={i} x={Math.round(48 + (i + 0.5) * step - 1)} y="303" fontSize="14" textAnchor="middle">{y}</text>
      ))}
      {series.map((s, i) => (
        <g key={s.name}>
          <rect x={legendX[i] + 1} y="330" width="8" height="8" fill={s.color} />
          <text x={legendX[i] + 12} y="338" fontSize="15">{s.name}</text>
        </g>
      ))}
      {[[1, 0], [301, 0], [601, 0], [1, 180], [601, 180], [1, 360], [301, 360], [601, 360]].map(([x, y]) => (
        <circle key={`${x}-${y}`} cx={x} cy={y} r="6" fill="#fff" stroke="#636363" strokeWidth="2.3" />
      ))}
    </svg>
  );
}

function Sheet() {
  return (
    <main className="flex min-h-0 grow">
      <div className="relative min-w-0 flex-1 overflow-hidden">
        <Grid />
        <div className="absolute left-[33px] top-[21px] h-[279px] w-[340px] border-2 border-[#217346]">
          <span className="absolute -bottom-[3px] -right-[3px] size-[6px] border-l border-t border-white bg-[#217346]" />
        </div>
        <button aria-label="快速分析" className="absolute left-[376px] top-[274px] flex size-[27px] items-center justify-center border border-[#444] bg-white">
          <svg width="16" height="21" viewBox="0 0 16 21" fill="#fcd98a" stroke="#e07b1a" strokeWidth="1.4"><path d="M6.5 1H14L9.7 7.3H14.5L3 20L6 11.5H1.2Z" /></svg>
        </button>
        <Chart />
      </div>
      <div className="flex w-[26px] shrink-0 flex-col items-center gap-1 pt-[6px]">
        <svg width="11" height="10" viewBox="0 0 11 10" aria-hidden="true"><path d="M5.5 0.5L11 9.5H0Z" fill="#6e6e6e" /></svg>
        <div className="w-[11px] grow rounded-full bg-[#707070]" />
        <svg width="11" height="10" viewBox="0 0 11 10" className="mb-[3px] mt-1" aria-hidden="true"><path d="M5.5 9.5L11 0.5H0Z" fill="#6e6e6e" /></svg>
      </div>
    </main>
  );
}

/* ---------- bottom bars ---------- */

function SheetTabs() {
  return (
    <div className="flex h-10 items-start border-t border-[#dcdcdc]">
      <div className="flex h-9 w-[140px] items-center gap-8 pl-8">
        <button aria-label="上一张"><svg width="8" height="12" viewBox="0 0 8 12" fill="none" stroke="#8a8a8a" strokeWidth="1.4"><path d="M7 0.7L1 6L7 11.3" /></svg></button>
        <button aria-label="下一张"><svg width="8" height="12" viewBox="0 0 8 12" fill="none" stroke="#8a8a8a" strokeWidth="1.4"><path d="M1 0.7L7 6L1 11.3" /></svg></button>
      </div>
      <button className="-mt-px h-[35px] w-[110px] rounded-b-[6px] border border-t-0 border-[#dcdcdc] bg-white px-[9px] text-[18px] leading-[30px] text-[#222]">
        <span className="block border-b-2 border-[#107c41]">我爱分享网</span>
      </button>
      <div className="ml-1 mt-[7px] h-6 w-px bg-[#c8c8c8]" />
      <button aria-label="新建工作表" className="ml-[52px] mt-[11px]">
        <svg width="15" height="15" viewBox="0 0 15 15" stroke="#333" strokeWidth="1.5"><path d="M0 7.5H15M7.5 0V15" /></svg>
      </button>
      <svg width="3" height="13" viewBox="0 0 3 13" className="ml-auto mr-6 mt-[13px]" fill="#444" aria-hidden="true"><path d="M0 0h3v3h-3zM0 5h3v3h-3zM0 10h3v3h-3z" /></svg>
      <div className="mr-6 mt-[7px] flex h-[22px] w-[521px] items-center gap-[6px] rounded-full bg-[#f5f5f5] pl-[2px] pr-[6px]">
        <svg width="9" height="11" viewBox="0 0 9 11" aria-hidden="true"><path d="M0 5.5L9 0V11Z" fill="#6e6e6e" /></svg>
        <div className="h-[11px] grow rounded-full bg-[#707070]" />
        <svg width="9" height="11" viewBox="0 0 9 11" aria-hidden="true"><path d="M9 5.5L0 0V11Z" fill="#6e6e6e" /></svg>
      </div>
    </div>
  );
}

function StatusBar() {
  const [zoom, setZoom] = useState(100);
  return (
    <footer className="flex h-[27px] items-center whitespace-nowrap bg-[#f4f4f4] pl-[14px] text-[15px] leading-[27px] text-[#333]">
      <span>就绪</span>
      <span className="ml-6 flex items-center gap-1">
        <svg width="19" height="19" viewBox="0 0 19 19" fill="none" stroke="#333" strokeWidth="1.3" aria-hidden="true">
          <circle cx="7.5" cy="2.7" r="2" />
          <path d="M0.8 2C1 3.5 2 5 4.5 5.5V10L2.5 16.5L4.5 17.5L7.5 12M14.5 2C14 3.5 13 5 10.5 5.5V10M9.5 13.5L13 17.3L18.3 10.5" />
        </svg>
        辅助功能: 一切就绪
      </span>
      <span className="ml-auto">平均值: 62.71333333</span>
      <span className="ml-5">计数: 29</span>
      <span className="ml-5">求和: 940.7</span>
      <button aria-label="普通" className="ml-6 flex h-full w-[50px] items-center justify-center bg-[#dcdcdc]">
        <svg width="17" height="17" viewBox="0 0 17 17" fill="none" stroke="#333" strokeWidth="1.3"><path d="M0.7 0.7H16.3V16.3H0.7ZM0.7 6H16.3M0.7 11H16.3M6 0.7V16.3M11 0.7V16.3" /></svg>
      </button>
      <button aria-label="页面布局视图" className="flex h-full w-[50px] items-center justify-center">
        <svg width="18" height="17" viewBox="0 0 18 17" fill="none" stroke="#333" strokeWidth="1.3"><path d="M0.7 0.7H17.3V16.3H0.7ZM4 3.5H14V13.5H4ZM6 6H12M6 8.5H12M6 11H12" /></svg>
      </button>
      <button aria-label="分页预览" className="flex h-full w-[50px] items-center justify-center">
        <svg width="18" height="17" viewBox="0 0 18 17" fill="none" stroke="#333" strokeWidth="1.3"><path d="M0.7 0.7H17.3V16.3H0.7ZM0.7 10.5H12V0.7M6.3 0.7V10.5" /></svg>
      </button>
      <button aria-label="缩小" className="ml-[7px]"><svg width="10" height="10" viewBox="0 0 10 10" stroke="#333" strokeWidth="1.2"><path d="M0 5H10" /></svg></button>
      <input
        type="range"
        aria-label="缩放"
        min={0}
        max={200}
        value={zoom}
        onChange={(e) => setZoom(Number(e.target.value))}
        className="mx-[6px] h-4 w-[125px] appearance-none bg-transparent [&::-webkit-slider-runnable-track]:h-px [&::-webkit-slider-runnable-track]:bg-[#707070] [&::-webkit-slider-thumb]:-mt-[7px] [&::-webkit-slider-thumb]:h-[14px] [&::-webkit-slider-thumb]:w-[6px] [&::-webkit-slider-thumb]:appearance-none [&::-webkit-slider-thumb]:bg-[#5a5a5a]"
      />
      <button aria-label="放大"><svg width="10" height="10" viewBox="0 0 10 10" stroke="#333" strokeWidth="1.2"><path d="M0 5H10M5 0V10" /></svg></button>
      <span className="w-20 pr-6 text-right">{zoom}%</span>
    </footer>
  );
}

/* ---------- tutorial marks ---------- */

function Badge({ n, at }: { n: number; at: string }) {
  return (
    <span className={clsx("absolute flex size-[22px] items-center justify-center rounded-full bg-[#e84343] text-[18px] leading-[22px] text-white shadow-[0_1px_3px_rgba(0,0,0,0.5)]", at)}>
      {n}
    </span>
  );
}

function Marks() {
  return (
    <div className="pointer-events-none absolute inset-0 z-30">
      <div className="absolute left-[243px] top-[60px] h-[44px] w-[67px] border-3 border-[#ed1c24]" />
      <div className="absolute left-[419px] top-[94px] h-[46px] w-[68px] border-3 border-[#ed1c24]" />
      <div className="absolute left-[419px] top-[161px] h-[88px] w-[90px] border-3 border-[#ed1c24]" />
      <div className="absolute left-[25px] top-[287px] h-[294px] w-[356px] border border-[#ed1c24]" />
      <Badge n={1} at="left-[62px] top-[594px]" />
      <Badge n={2} at="left-[221px] top-[35px]" />
      <Badge n={3} at="left-[486px] top-[69px]" />
      <Badge n={4} at="left-[520px] top-[231px]" />
      <div className="absolute left-[92px] top-[592px] text-[20px] font-bold leading-7 text-[#ed1c24]">选中所有数据</div>
      <div className="absolute left-[706px] top-[204px] text-[#ed1c24]">
        <div className="flex gap-[14px] text-[22px] font-bold leading-7">
          {"我爱分享网".split("").map((ch) => <span key={ch}>{ch}</span>)}
        </div>
        <div className="mt-1 font-['Liberation_Serif',serif] text-[18px] font-bold leading-6">www.zhanshaoyi.com</div>
      </div>
    </div>
  );
}

export default function App() {
  return (
    <div className="relative flex h-screen flex-col overflow-hidden border border-[#107c41] bg-[#efefef] font-['Noto_Sans','Noto_Sans_CJK_SC',sans-serif]">
      <TitleBar />
      <TabBar />
      <Ribbon />
      <FormulaBar />
      <Sheet />
      <SheetTabs />
      <StatusBar />
      <Marks />
    </div>
  );
}
